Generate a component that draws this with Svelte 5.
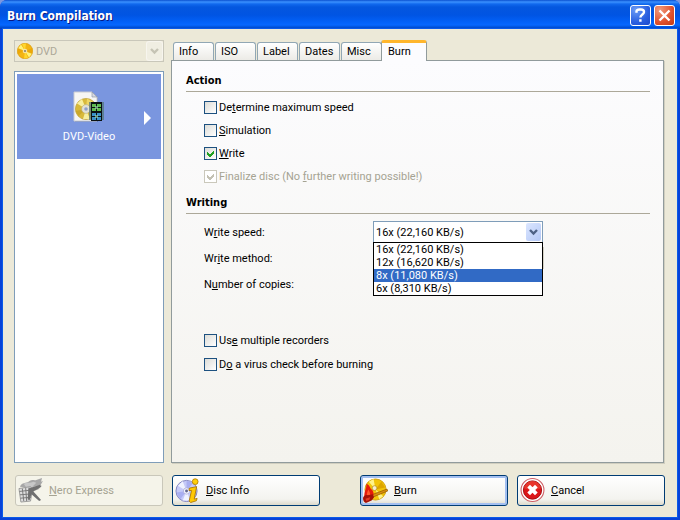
<script>
  const tabs = ['Info', 'ISO', 'Label', 'Dates', 'Misc', 'Burn'];
  const speeds = ['16x (22,160 KB/s)', '12x (16,620 KB/s)', '8x (11,080 KB/s)', '6x (8,310 KB/s)'];
  const actions = [
    { id: 'max', a: 'De', k: 't', b: 'ermine maximum speed' },
    { id: 'sim', a: '', k: 'S', b: 'imulation' },
    { id: 'write', a: '', k: 'W', b: 'rite', checked: true },
    { id: 'fin', a: 'Finalize disc (No ', k: 'f', b: 'urther writing possible!)', checked: true, disabled: true }
  ];
  const extras = [
    { id: 'multi', a: 'Us', k: 'e', b: ' multiple recorders' },
    { id: 'virus', a: 'D', k: 'o', b: ' a virus check before burning' }
  ];
  let active = $state('Burn');
  let highlighted = $state(2);
</script>

{#snippet check(c)}
  <label class="check" class:off={c.disabled} for={c.id}>
    <span class="box">
      <input type="checkbox" id={c.id} checked={c.checked} disabled={c.disabled} />
      <svg class="tick" viewBox="0 0 13 13" shape-rendering="crispEdges"><path d="M3 5v3l2 2h1l4-4V3L6 7H5z" /></svg>
    </span>
    <span>{c.a}<u>{c.k}</u>{c.b}</span>
  </label>
{/snippet}

{#snippet chevron()}
  <svg class="chev" viewBox="0 0 15 17" aria-hidden="true"><path d="M4 6.5l3.500 3.500L11 6.500" /></svg>
{/snippet}

<div class="window">
  <header>
    <h1>Burn Compilation</h1>
    <button class="cap" aria-label="Help">
      <svg viewBox="0 0 19 19"><path d="M5.500 6.800V5.500C5.500 4 6.500 3.500 8.500 3.500H10C12 3.500 13 4.300 13 6C13 8.500 9.400 8.400 9.400 11.500M9.400 13.200V15.700" fill="none" stroke="#fff" stroke-width="2.400" /></svg>
    </button>
    <button class="cap close" aria-label="Close">
      <svg viewBox="0 0 19 19"><path d="M4.500 4.500l10 10M14.500 4.500l-10 10" stroke="#fff" stroke-width="2.400" /></svg>
    </button>
  </header>

  <div class="client">
    <main>
      <aside>
        <div class="medium">
          <svg class="disc" viewBox="0 0 16 16" aria-hidden="true">
            <circle cx="8" cy="8" r="7.7" fill="#f3b413" stroke="#d99500" stroke-width=".6" />
            <path d="M8 8L1 5.5 4 1.5z M8 8l7 2.5-3 4z" fill="#fff27a" />
            <path d="M8 8L5 1l4-.6z M8 8l3 7-4 .6z" fill="#ffd72e" />
            <path d="M8 8L15.5 5 15 11z M8 8L.5 11 1 5z" fill="#e8a000" opacity=".6" />
            <circle cx="8" cy="8" r="2.3" fill="#f6e4a4" /><circle cx="8" cy="8" r="1.1" fill="#8b8470" />
          </svg>
          <select disabled aria-label="Medium"><option>DVD</option></select>
          {@render chevron()}
        </div>
        <div class="list">
          <button class="item">
            <svg class="file" viewBox="0 0 32 32" aria-hidden="true">
              <path d="M2 2h18l5 5v24H2z" fill="#5168a2" opacity=".6" />
              <path d="M1 1h18l5 5v24H1z" fill="#f6f6f4" stroke="#c9cbd0" />
              <path d="M19 1v5h5z" fill="#d6d9e2" stroke="#8890a0" stroke-width=".6" />
              <circle cx="13" cy="18" r="10.6" fill="#d8b93a" stroke="#bfa441" stroke-width=".7" />
              <path d="M13 18L4 12.5 9 8z M13 18l4 10-7 0z" fill="#f7efa0" />
              <path d="M13 18l1-10.5 7 4z" fill="#eed664" />
              <path d="M13 18L2.5 20l3 5z" fill="#c19c20" opacity=".6" />
              <circle cx="13" cy="18" r="4.4" fill="#e2e1d4" stroke="#b7ab79" stroke-width=".6" />
              <circle cx="13" cy="18" r="1.8" fill="#8fa0cb" />
              <path d="M16 11h15v18H16z" fill="#53777c" opacity=".75" />
              <path d="M18 11h11v19H18z" fill="#0a1113" />
              <path d="M19 13h4v3h-4zM24 13h4v3h-4zM19 17h4v3h-4zM24 17h4v3h-4z" fill="#5fba50" />
              <path d="M19 22h4v3h-4zM24 22h4v3h-4zM19 26h4v3h-4zM24 26h4v3h-4z" fill="#3b91c8" />
              <path d="M22 15h3v3h-3zM22 24h3v3h-3z" fill="#a4dfb7" opacity=".6" />
            </svg>
            <span>DVD-Video</span>
            <svg class="arrow" viewBox="0 0 7 14" aria-hidden="true"><path d="M0 0l7 7-7 7z" fill="#fff" /></svg>
          </button>
        </div>
      </aside>

      <section class="pages">
        <div class="tabs" role="tablist">
          {#each tabs as t}
            <button role="tab" class="tab" class:on={active === t} aria-selected={active === t} onclick={() => (active = t)}>{t}</button>
          {/each}
        </div>
        <div class="panel" role="tabpanel">
          <h2>Action</h2>
          <div class="checks">
            {#each actions as c}{@render check(c)}{/each}
          </div>
          <h2>Writing</h2>
          <div class="fields">
            <label for="speed">W<u>r</u>ite speed:</label>
            <div class="combo">
              <select id="speed">{#each speeds as s}<option>{s}</option>{/each}</select>
              {@render chevron()}
              <ul role="listbox" aria-label="Write speed">
                {#each speeds as s, i}
                  <li role="option" aria-selected={i === highlighted} class:hot={i === highlighted} onmouseenter={() => (highlighted = i)}>{s}</li>
                {/each}
              </ul>
            </div>
            <label for="method">Wr<u>i</u>te method:</label>
            <select id="method" disabled></select>
            <label for="copies">N<u>u</u>mber of copies:</label>
            <input id="copies" type="text" />
          </div>
          <div class="checks extras">
            {#each extras as c}{@render check(c)}{/each}
          </div>
        </div>
      </section>
    </main>

    <footer>
      <button class="cmd" disabled>
        <svg viewBox="0 0 26 26" aria-hidden="true">
          <path d="M2 9C4 4 8 6 12 3c3-2 5 0 7-1l6-2-1 4 2-1-3 5 2 0-4 4-3 1-2-2z" fill="#a7a7a7" />
          <path d="M6 6c4-2 6 0 10-2l3 1-4 4 5-1-4 4-8-3z" fill="#c7c7c7" />
          <path d="M1 11l12-2 2 3-2 12-10 1z" fill="#dedede" stroke="#888" stroke-width=".8" />
          <path d="M1.500 14l12.500-1.500M2 17.500l12-1M2.500 21l11-1M4.500 11L6 24M8 10.500l1 13.500M11.500 10v13" stroke="#777" stroke-width="1" fill="none" />
          <path d="M11 11l12-4 1 2-8 5 8 9-2 1-8-7-2 6-2-1z" fill="#707070" />
        </svg>
        <span><u>N</u>ero Express</span>
      </button>
      <button class="cmd">
        <svg viewBox="0 0 26 26" aria-hidden="true">
          <circle cx="12" cy="13.500" r="11" fill="#c6caf8" stroke="#8183bd" />
          <path d="M12 13.500L3 8 8 3.500zM12 13.500l4 10-8 0z" fill="#f0f2ff" />
          <path d="M12 13.500L12 3l7 2zM12 13.500L1.500 15l4 7z" fill="#a9aef0" />
          <circle cx="12" cy="13.500" r="3.300" fill="#f4f4ff" stroke="#9fa0ce" stroke-width=".7" /><circle cx="12" cy="13.500" r="1.500" fill="#60648d" />
          <circle cx="21" cy="3.800" r="3" fill="#ffce08" stroke="#a97400" stroke-width=".8" />
          <path d="M15 10.500l7.500-1.500-2.500 13 3-.8-.8 2.500-6 1.800-1.500-1.500 2.500-11H14.500z" fill="#ffc903" stroke="#a97400" stroke-width=".9" />
        </svg>
        <span><u>D</u>isc Info</span>
      </button>
      <button class="cmd main">
        <svg viewBox="0 0 26 26" aria-hidden="true">
          <circle cx="13" cy="12" r="11" fill="#f2c40a" stroke="#c99500" stroke-width=".8" />
          <path d="M13 12L6 4l5-3zM13 12l8 7-4 3z" fill="#fff38a" />
          <path d="M13 12L19 4l4 6z" fill="#dca500" />
          <circle cx="12" cy="10.500" r="2.500" fill="#f7eed0" stroke="#af8b20" stroke-width=".7" />
          <path d="M9 17.500L25 11.500l.7 2L10 20z" fill="#d99010" stroke="#8e5200" stroke-width=".7" />
          <path d="M2 21C0 15 4 12 3.500 6 8 8 7 11 9 12c3 3 2 6 1 8l-4 4z" fill="#e51b0c" />
          <path d="M4 18c0-3 1-4 1.500-6 2 3 2 5 2 6z" fill="#ff5a2c" />
          <path d="M0 20.500Q1 17 5 18l5-1 1.500 3-2.500 3.500L3 26Q0 25 0 20.500z" fill="#a31108" />
          <path d="M2.500 21.500l5-1.500-1 3-3 1z" fill="#e43b25" />
        </svg>
        <span><u>B</u>urn</span>
      </button>
      <button class="cmd">
        <svg viewBox="0 0 26 26" aria-hidden="true">
          <circle cx="13" cy="12.500" r="11.900" fill="#fff" stroke="#cf5d63" stroke-width="1.100" />
          <circle cx="13" cy="12.500" r="9.500" fill="#db1519" stroke="#a60e14" />
          <path d="M4.500 11a8.500 8 0 0 1 17 0q-8 3-17 0z" fill="#f3513d" opacity=".55" />
          <path d="M9 8.500l8 8M17 8.500l-8 8" stroke="#fff" stroke-width="4" />
        </svg>
        <span><u>C</u>ancel</span>
      </button>
    </footer>
  </div>
</div>

<style>
  :global(body) { background: #7b97e0; }
  * { box-sizing: border-box; }
  .window {
    display: flex; flex-direction: column; min-height: 100vh;
    background: #0842d8; border-radius: 7px 7px 0 0; overflow: hidden;
    font: 11px/13px Roboto, sans-serif; color: #000;
  }
  button, select, input { font: inherit; color: inherit; margin: 0; }
  svg { display: block; }
  u { text-underline-offset: 1px; }
  header {
    display: flex; align-items: center; gap: 3px; height: 29px; padding: 2px 5px 0 7px;
    background: linear-gradient(#0a50d0 0, #3b91ff 2px, #1169ee 4px, #0457df 7px, #0054e3 15px, #0261f8 22px, #0667ff 25px, #0053dc 27px, #003dbb 29px);
  }
  h1 { flex: 1; margin: 0; font: bold 12px/18px "DejaVu Sans Condensed", sans-serif; color: #fff; text-shadow: 1px 1px 0 #0a1883; }
  .cap {
    width: 21px; height: 21px; padding: 0; border: 1px solid #fff; border-radius: 3px;
    background: radial-gradient(circle at 25% 20%, #6c9cf5, #2a5fe0 60%, #1c49cb);
  }
  .cap svg { width: 19px; height: 19px; }
  .close { background: radial-gradient(circle at 25% 20%, #f09a7c, #e0512d 60%, #c23a13); }
  .client {
    flex: 1; display: flex; flex-direction: column; gap: 12px;
    margin: 0 3px 3px; padding: 11px 13px 11px 11px; background: #ece9d8; box-shadow: 0 0 0 1px #0a5ae8;
  }
  main { flex: 1; display: flex; gap: 7px; }
  aside { width: 150px; display: flex; flex-direction: column; gap: 9px; }
  .medium, .combo { position: relative; }
  select {
    display: block; width: 100%; height: 22px; padding: 0 20px 0 2px; appearance: none;
    border: 1px solid #7f9db9; border-radius: 0; background: #fff; outline: 0; opacity: 1;
  }
  .medium select { padding-left: 21px; border-color: #c9c7ba; background: #ece9d8; color: #aca899; }
  .disc { position: absolute; left: 3px; top: 3px; width: 16px; height: 16px; }
  .chev {
    position: absolute; right: 2px; top: 2px; width: 15px; height: 18px; border-radius: 2px;
    background: linear-gradient(135deg, #dbe6ff, #b4c8f6); pointer-events: none;
  }
  .chev path { fill: none; stroke: #4d6185; stroke-width: 2.4; }
  .medium .chev { background: #f0eee2; box-shadow: 0 0 0 1px #f7f5ee; }
  .medium .chev path { stroke: #c5c3b4; }
  .list { flex: 1; padding: 2px; border: 1px solid #7f9db9; background: #fff; }
  .item {
    position: relative; display: flex; flex-direction: column; align-items: center; gap: 7px;
    width: 100%; height: 85px; padding: 17px 0 0; border: 0; background: #7a96df; color: #fff;
  }
  .file { width: 32px; height: 32px; }
  .arrow { position: absolute; right: 10px; top: 37px; width: 7px; height: 14px; }
  .pages { flex: 1; display: flex; flex-direction: column; }
  .tabs { position: relative; z-index: 1; display: flex; align-items: flex-end; height: 20px; padding-left: 2px; gap: 1px; }
  .tab {
    width: 41px; height: 18px; padding: 0 0 0 5px; text-align: left;
    border: 1px solid #91a7b4; border-bottom: 0; border-radius: 3px 3px 0 0;
    background: linear-gradient(#fff, #ecebe6);
  }
  .on {
    width: 46px; height: 21px; margin: 0 0 -1px -2px; padding: 0 0 2px 6px; z-index: 1;
    border-color: #919b9c; border-top: 3px solid #ffb62c; background: #fcfcfe;
  }
  .panel {
    flex: 1; padding: 13px 13px 0 14px; border: 1px solid #919b9c; box-shadow: 1px 1px 0 #d0cebf;
    background: linear-gradient(#fcfcfe, #f4f3ee);
  }
  h2 { margin: 0; padding-bottom: 4px; border-bottom: 1px solid #aca899; font: bold 11px/13px "DejaVu Sans Condensed", sans-serif; }
  .checks { display: flex; flex-direction: column; gap: 10px; padding: 9px 0 13px 18px; }
  .check { display: flex; align-items: center; gap: 2px; height: 13px; align-self: flex-start; }
  .box { position: relative; width: 13px; height: 13px; }
  .box input {
    display: block; width: 13px; height: 13px; appearance: none; border: 1px solid #1d5180;
    background: linear-gradient(135deg, #dcdcd7, #fff);
  }
  .tick { position: absolute; inset: 0; width: 13px; height: 13px; fill: #21a121; visibility: hidden; pointer-events: none; }
  .box input:checked + .tick { visibility: visible; }
  .off { color: #a5a392; }
  .off .box input { border-color: #cac8bb; background: #fff; }
  .off .tick { fill: #c3c1b3; }
  .fields {
    display: grid; grid-template-columns: 169px 170px; grid-auto-rows: 22px; row-gap: 4px;
    align-items: center; padding: 7px 0 0 18px;
  }
  .fields > select { width: 171px; border-color: #d5d2c5; background: #f5f4ea; }
  .fields > input { width: 60px; height: 20px; border: 1px solid #7f9db9; background: #fff; }
  ul {
    position: absolute; z-index: 2; top: 21px; left: 0; right: 0; margin: 0; padding: 0;
    list-style: none; border: 1px solid #000; background: #fff;
  }
  li { height: 13px; padding-left: 2px; }
  .hot { background: #316ac5; color: #fff; }
  .extras { padding-top: 39px; gap: 11px; }
  footer { display: flex; gap: 9px; padding-left: 1px; margin-right: -1px; }
  .cmd {
    display: flex; align-items: center; width: 148px; height: 31px; padding: 0 2px; text-align: left;
    border: 1px solid #003c74; border-radius: 3px; background: linear-gradient(#fff, #f3f3ef 80%, #dddacb);
  }
  .cmd svg { width: 25px; height: 25px; margin-right: 6px; }
  .cmd:disabled { border-color: #c9c7ba; background: #f5f4ea; color: #a5a392; }
  .main { margin-left: auto; box-shadow: inset 0 0 0 2px #a3bff0; }
</style>
